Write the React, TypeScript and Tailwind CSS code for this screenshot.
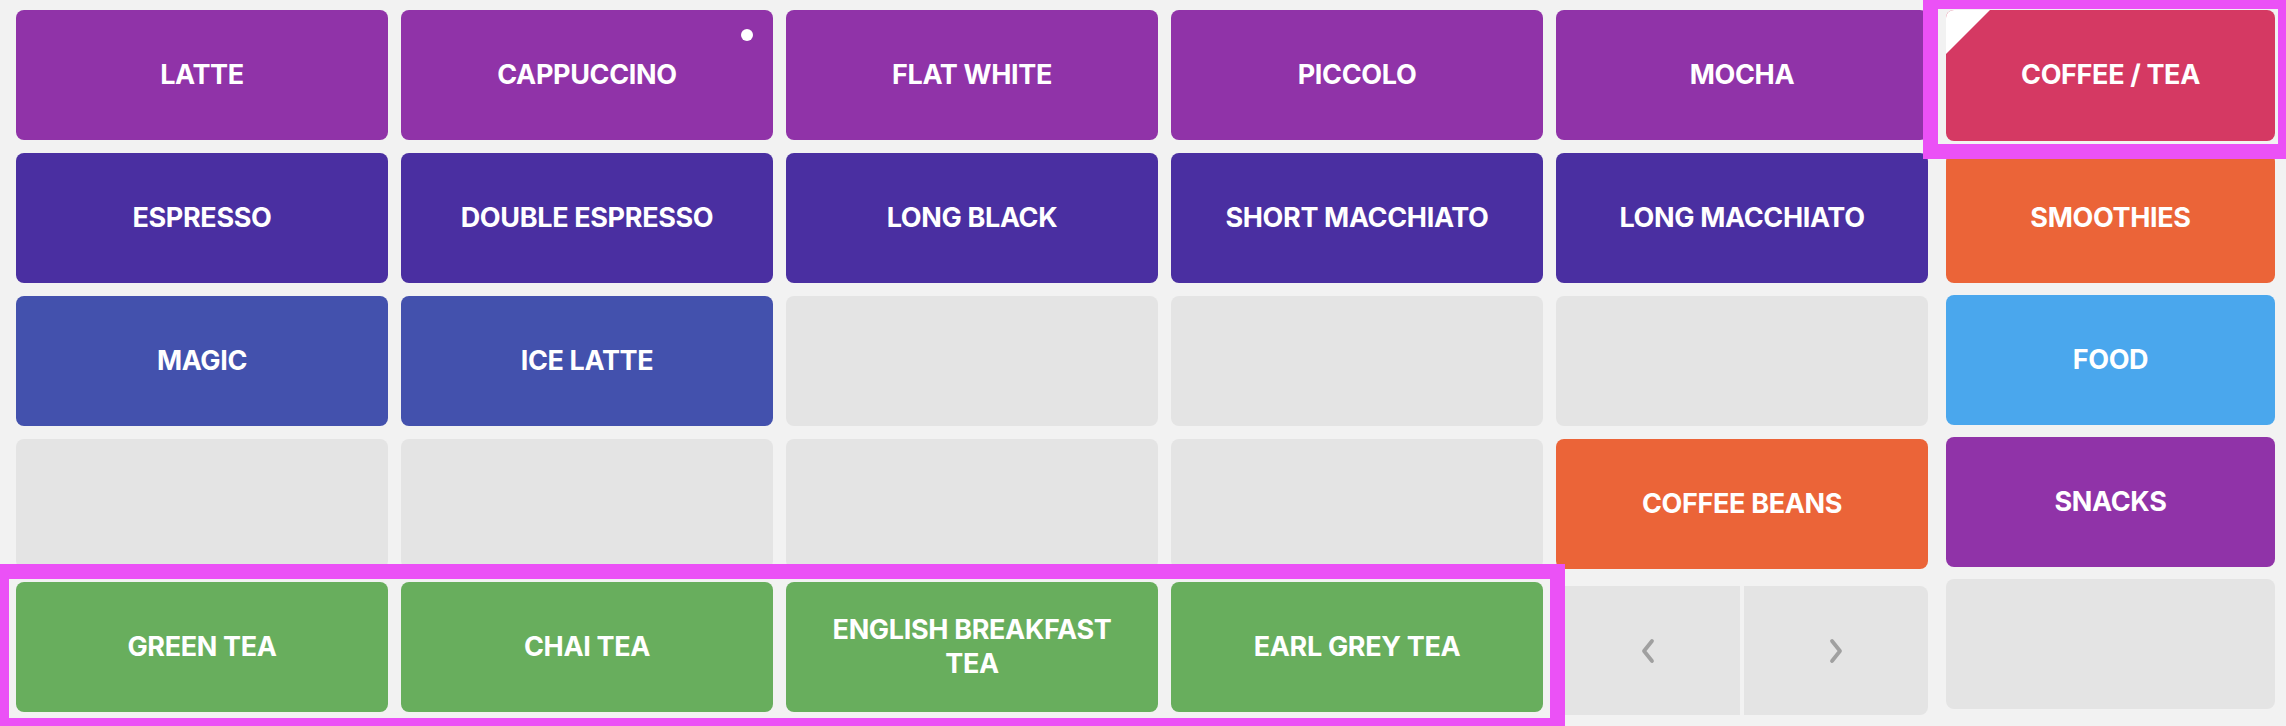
import React from "react";

type Tile = {
  label?: string;
  color?: string;
  dot?: boolean;
};

const mainTiles: Tile[] = [
  { label: "LATTE", color: "bg-[#9033a8]" },
  { label: "CAPPUCCINO", color: "bg-[#9033a8]", dot: true },
  { label: "FLAT WHITE", color: "bg-[#9033a8]" },
  { label: "PICCOLO", color: "bg-[#9033a8]" },
  { label: "MOCHA", color: "bg-[#9033a8]" },
  { label: "ESPRESSO", color: "bg-[#4a2fa1]" },
  { label: "DOUBLE ESPRESSO", color: "bg-[#4a2fa1]" },
  { label: "LONG BLACK", color: "bg-[#4a2fa1]" },
  { label: "SHORT MACCHIATO", color: "bg-[#4a2fa1]" },
  { label: "LONG MACCHIATO", color: "bg-[#4a2fa1]" },
  { label: "MAGIC", color: "bg-[#4351ad]" },
  { label: "ICE LATTE", color: "bg-[#4351ad]" },
  {},
  {},
  {},
  {},
  {},
  {},
  {},
  { label: "COFFEE BEANS", color: "bg-[#eb6438]" },
  { label: "GREEN TEA", color: "bg-[#68ae5d]" },
  { label: "CHAI TEA", color: "bg-[#68ae5d]" },
  { label: "ENGLISH BREAKFAST TEA", color: "bg-[#68ae5d]" },
  { label: "EARL GREY TEA", color: "bg-[#68ae5d]" },
];

const categories: Tile[] = [
  { label: "SMOOTHIES", color: "bg-[#eb6438]" },
  { label: "FOOD", color: "bg-[#4aa7ed]" },
  { label: "SNACKS", color: "bg-[#9033a8]" },
  {},
];

const TileButton = ({ tile }: { tile: Tile }) => {
  if (!tile.label) {
    return <div className="h-[130px] rounded-lg bg-[#e4e4e4]" />;
  }
  return (
    <button
      className={`${tile.color} relative h-[130px] rounded-lg px-9 flex items-center justify-center text-center text-white text-[27px] leading-[34px] font-bold tracking-[-0.35px]`}
    >
      {tile.label}
      {tile.dot && (
        <span className="absolute top-[19px] right-[20px] w-[12px] h-[12px] rounded-full bg-white" />
      )}
    </button>
  );
};

const Chevron = ({ dir }: { dir: "left" | "right" }) => (
  <svg width="16" height="26" viewBox="0 0 16 26" fill="none">
    <path
      d={dir === "left" ? "M12 3 L4 13 L12 23" : "M4 3 L12 13 L4 23"}
      stroke="#a0a0a0"
      strokeWidth="3.8"
      strokeLinecap="round"
      strokeLinejoin="round"
    />
  </svg>
);

const App = () => {
  return (
    <div
      className="relative w-[2286px] h-[726px] overflow-hidden bg-[#f2f2f2] flex pl-4 pt-[10px]"
      style={{ fontFamily: "Inter, 'Noto Sans', sans-serif" }}
    >
      <div className="grid grid-cols-5 gap-[13px] w-[1912px] content-start">
        {mainTiles.map((tile, i) => (
          <TileButton key={i} tile={tile} />
        ))}
        <div className="mt-1 h-[129px] flex gap-1">
          <button className="flex-1 rounded-l-lg bg-[#e4e4e4] flex items-center justify-center">
            <Chevron dir="left" />
          </button>
          <button className="flex-1 rounded-r-lg bg-[#e4e4e4] flex items-center justify-center">
            <Chevron dir="right" />
          </button>
        </div>
      </div>

      <div className="ml-[18px] w-[329px] flex flex-col gap-3">
        <button className="relative h-[131px] rounded-lg overflow-hidden bg-[#d53963] flex items-center justify-center text-white text-[27px] font-bold tracking-[-0.35px]">
          <span className="absolute top-0 left-0 w-0 h-0 border-t-[44px] border-r-[44px] border-t-white border-r-transparent" />
          COFFEE / TEA
        </button>
        {categories.map((tile, i) => (
          <TileButton key={i} tile={tile} />
        ))}
      </div>

      {/* highlight outlines */}
      <div className="absolute left-[1923px] top-[-6px] w-[370px] h-[165px] border-[15px] border-[#eb51f6] pointer-events-none" />
      <div className="absolute left-[-6px] top-[564px] w-[1571px] h-[169px] border-[15px] border-[#eb51f6] pointer-events-none" />
    </div>
  );
};

export default App;
